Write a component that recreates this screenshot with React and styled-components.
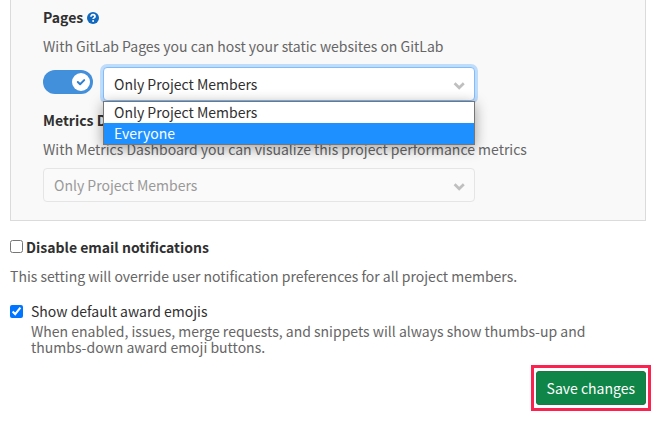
import React, { useState } from 'react';
import styled, { createGlobalStyle } from 'styled-components';

const GlobalStyle = createGlobalStyle`
  *, *::before, *::after { box-sizing: border-box; }
  body {
    margin: 0;
    background: #fff;
    color: #303030;
    font-family: "Noto Sans CJK SC", "Noto Sans", sans-serif;
    font-size: 14px;
    line-height: 20px;
  }
  button, input, select { font: inherit; }
`;

const Page = styled.main`
  padding: 0 14px 10px 10px;
`;

const Panel = styled.section`
  padding: 7px 32px 18px;
  background: #f9f9f9;
  border: 1px solid #dbdbdb;
  border-top: 0;
`;

const Setting = styled.div`
  max-width: 500px;
  & + & { margin-top: 9px; }
`;

const Heading = styled.div`
  display: flex;
  align-items: center;
  gap: 4px;
  font-weight: 700;
`;

const Description = styled.p`
  margin: 9px 0;
  color: #666;
`;

const HelpLink = styled.a`
  display: flex;
  padding-top: 2px;
  color: #1068bf;
`;

const Controls = styled.div`
  display: flex;
  align-items: flex-start;
  gap: 10px;
  max-width: 432px;
  margin-top: ${({ $spaced }) => ($spaced ? '11px' : '0')};
`;

const Toggle = styled.button`
  display: flex;
  flex: none;
  align-items: center;
  justify-content: ${({ $on }) => ($on ? 'flex-end' : 'flex-start')};
  width: 50px;
  height: 24px;
  margin: 3px 0 0;
  padding: 0 3px;
  border: 0;
  border-radius: 12px;
  background: ${({ $on }) => ($on ? '#428fdc' : '#999')};
`;

const SelectField = styled.div`
  position: relative;
  flex: 1;
`;

const Select = styled.select`
  display: block;
  width: 100%;
  height: 34px;
  padding: 0 30px 0 10px;
  appearance: none;
  border: 1px solid ${({ $active }) => ($active ? '#80bdff' : '#e5e5e5')};
  border-radius: 4px;
  outline: 0;
  background: ${({ $active }) => ($active ? '#fff' : '#fafafa')};
  box-shadow: ${({ $active }) => ($active ? '0 0 0 3px #bfdcfb' : 'none')};
  color: #303030;
  &:disabled { color: #999; opacity: 1; }
`;

const Chevron = styled.svg`
  position: absolute;
  top: 15px;
  right: 10px;
  width: 12px;
  height: 8px;
  pointer-events: none;
`;

const Menu = styled.ul`
  position: absolute;
  z-index: 1;
  top: 100%;
  left: 0;
  right: 0;
  margin: 0;
  padding: 0;
  list-style: none;
  border: 1px solid #767676;
  background: #fff;
  box-shadow: 0 3px 14px rgba(0, 0, 0, 0.38);
`;

const Option = styled.li`
  padding: 0 10px;
  line-height: 21px;
  background: ${({ $selected }) => ($selected ? '#1e90ff' : '#fff')};
  color: ${({ $selected }) => ($selected ? '#fff' : '#303030')};
`;

const CheckRow = styled.div`
  display: flex;
  align-items: flex-start;
  gap: ${({ $wide }) => ($wide ? '8px' : '3px')};
  margin-top: ${({ $wide }) => ($wide ? '15px' : '16px')};
  font-weight: ${({ $wide }) => ($wide ? '400' : '700')};
`;

const Checkbox = styled.input`
  flex: none;
  width: 13px;
  height: 13px;
  margin: ${({ $lower }) => ($lower ? '4px' : '3px')} 0 0;
`;

const Note = styled.p`
  margin: 9px 0 0;
  color: #666;
`;

const HelpText = styled.p`
  margin: 2px 0 0;
  max-width: 590px;
  color: #666;
  line-height: 16px;
`;

const Actions = styled.div`
  display: flex;
  justify-content: flex-end;
  margin: 10px -5px 0 0;
`;

const Highlight = styled.div`
  padding: 3px 2px;
  border: 3px solid #fc2250;
`;

const SaveButton = styled.button`
  display: block;
  height: 34px;
  padding: 0 11px;
  border: 0;
  border-radius: 4px;
  background: #108548;
  box-shadow: inset 0 0 0 1px #217645;
  color: #fff;
`;

function SelectChevron() {
  return (
    <Chevron viewBox="0 0 12 8" aria-hidden="true">
      <path d="M1.6 1.3 6.2 5.8 10.8 1.3" fill="none" stroke="#bfbfbf" strokeWidth="2.7" />
    </Chevron>
  );
}

const levels = ['Only Project Members', 'Everyone'];

export default function App() {
  const [enabled, setEnabled] = useState(true);

  return (
    <>
      <GlobalStyle />
      <Page>
        <Panel>
          <Setting>
            <Heading>
              <label htmlFor="pages">Pages</label>
              <HelpLink href="#pages-help" aria-label="Help">
                <svg width="12" height="12" viewBox="0 0 12 12" aria-hidden="true">
                  <circle cx="6" cy="6" r="6" fill="currentColor" />
                  <path d="M4 4.7C4 3.3 4.9 2.7 6 2.7s2 .7 2 1.7c0 1.5-1.9 1.4-1.9 2.7" fill="none" stroke="#fff" strokeWidth="1.7" />
                  <circle cx="6.1" cy="9" r="1" fill="#fff" />
                </svg>
              </HelpLink>
            </Heading>
            <Description>With GitLab Pages you can host your static websites on GitLab</Description>
            <Controls $spaced>
              <Toggle
                type="button"
                role="switch"
                aria-checked={enabled}
                aria-label="Pages"
                $on={enabled}
                onClick={() => setEnabled(!enabled)}
              >
                <svg width="18" height="18" viewBox="0 0 18 18" aria-hidden="true">
                  <circle cx="9" cy="9" r="9" fill="#fff" />
                  <path d="m5.8 9 2.3 2.2 4.1-4.1" fill="none" stroke="#2f7fd0" strokeWidth="2" strokeLinecap="round" strokeLinejoin="round" />
                </svg>
              </Toggle>
              <SelectField>
                <Select id="pages" $active defaultValue={levels[0]}>
                  {levels.map((level) => <option key={level}>{level}</option>)}
                </Select>
                <SelectChevron />
                <Menu role="listbox" aria-label="Pages visibility">
                  {levels.map((level) => (
                    <Option key={level} role="option" aria-selected={level === 'Everyone'} $selected={level === 'Everyone'}>
                      {level}
                    </Option>
                  ))}
                </Menu>
              </SelectField>
            </Controls>
          </Setting>
          <Setting>
            <Heading><label htmlFor="metrics">Metrics Dashboard</label></Heading>
            <Description>With Metrics Dashboard you can visualize this project performance metrics</Description>
            <Controls>
              <SelectField>
                <Select id="metrics" disabled defaultValue={levels[0]}>
                  {levels.map((level) => <option key={level}>{level}</option>)}
                </Select>
                <SelectChevron />
              </SelectField>
            </Controls>
          </Setting>
        </Panel>
        <CheckRow>
          <Checkbox type="checkbox" id="disable-email" />
          <label htmlFor="disable-email">Disable email notifications</label>
        </CheckRow>
        <Note>This setting will override user notification preferences for all project members.</Note>
        <CheckRow $wide>
          <Checkbox $lower type="checkbox" id="award-emojis" defaultChecked aria-describedby="emoji-help" />
          <div>
            <label htmlFor="award-emojis">Show default award emojis</label>
            <HelpText id="emoji-help">
              When enabled, issues, merge requests, and snippets will always show thumbs-up and thumbs-down award emoji buttons.
            </HelpText>
          </div>
        </CheckRow>
        <Actions>
          <Highlight><SaveButton type="button">Save changes</SaveButton></Highlight>
        </Actions>
      </Page>
    </>
  );
}
